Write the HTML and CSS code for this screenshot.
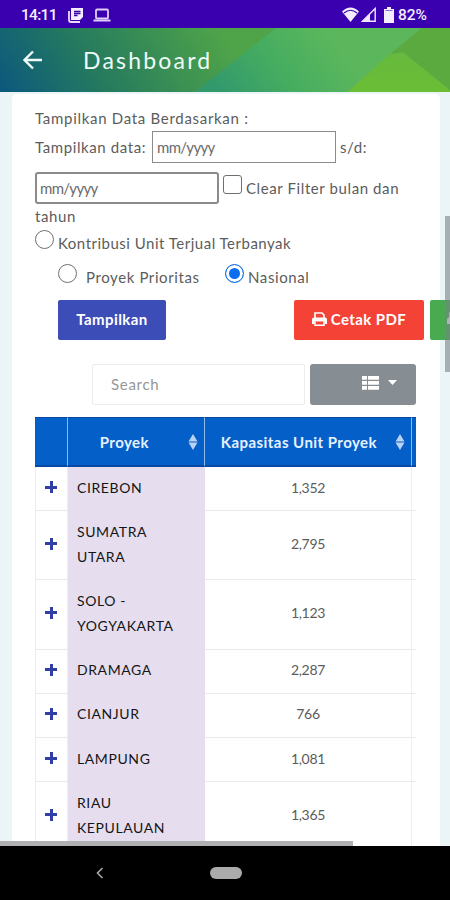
FILE: index.html
```html
<!DOCTYPE html>
<html lang="id">
<head>
  <meta charset="UTF-8">
  <meta name="viewport" content="width=device-width, initial-scale=1.0">
  <title>Dashboard</title>
  <link rel="stylesheet" href="styles.css">
</head>
<body>
  <div class="status-bar">
    <span class="clock">14:11</span>
    <svg class="status-news" width="16" height="16" viewBox="0 0 16 16">
      <path d="M1 4v9q0 2 2 2h9" fill="none" stroke="#e9ddfb" stroke-width="1.8"/>
      <path d="M3 1h12v9l-3 3H3z" fill="#f4edff"/>
      <path d="M6 4.500h6.500M6 6.500h6.500M6 8.500h3.500" stroke="#3a00a8" stroke-width="1.300"/>
    </svg>
    <svg class="status-laptop" width="18" height="14" viewBox="0 0 18 14">
      <rect x="3" y="1.500" width="12" height="9" rx="1" fill="none" stroke="#e0cdf8" stroke-width="1.800"/>
      <path d="M0.500 12.500h17" stroke="#e0cdf8" stroke-width="2"/>
    </svg>
    <div class="status-right">
      <svg width="17" height="15" viewBox="0 0 17 15">
        <path d="M0 4.500Q8.500 -3.500 17 4.500L8.500 15z" fill="#f4edff"/>
        <path d="M2 6Q8.500 0.500 15 6" fill="none" stroke="#3a00b0" stroke-width="1.200"/>
      </svg>
      <svg width="15" height="15" viewBox="0 0 15 15">
        <path d="M1.500 14.200L14.200 1.500V14.200z" fill="none" stroke="#f0e6ff" stroke-width="1.400"/>
        <path d="M1 14.500L9 6.500V14.500z" fill="#f0e6ff"/>
      </svg>
      <svg class="battery" width="10" height="16" viewBox="0 0 10 16">
        <path d="M3 0h4v2h3v14H0V2h3z" fill="#f4edff"/>
        <path d="M1.500 3.500h7" stroke="#8c68cf" stroke-width="1"/>
      </svg>
      <span class="percent">82%</span>
    </div>
  </div>

  <header class="app-bar">
    <svg class="app-bar-bg" viewBox="0 0 450 64" preserveAspectRatio="none">
      <defs>
        <linearGradient id="base" x1="0" y1="64" x2="190" y2="-50" gradientUnits="userSpaceOnUse">
          <stop offset="0" stop-color="#0b587e"/>
          <stop offset="0.400" stop-color="#24795f"/>
          <stop offset="1" stop-color="#4fa449"/>
        </linearGradient>
        <linearGradient id="mid" x1="220" y1="64" x2="320" y2="-10" gradientUnits="userSpaceOnUse">
          <stop offset="0" stop-color="#32996d"/>
          <stop offset="0.500" stop-color="#46ad60"/>
          <stop offset="1" stop-color="#5cb75c"/>
        </linearGradient>
        <linearGradient id="leaf" x1="0" y1="0" x2="0" y2="1">
          <stop offset="0" stop-color="#66b93e"/>
          <stop offset="1" stop-color="#6abe35"/>
        </linearGradient>
      </defs>
      <rect width="450" height="64" fill="url(#base)"/>
      <path d="M276 0H422L347 64H195z" fill="url(#mid)"/>
      <path d="M422 0H450V62L403 24L390 26z" fill="#5aaa40"/>
      <path d="M390 26L403 24L450 62V64H347z" fill="url(#leaf)"/>
    </svg>
    <svg class="back" width="20" height="20" viewBox="0 0 20 20">
      <path d="M19 10H2M10 1.500L1.500 10L10 18.500" fill="none" stroke="#eefaf8" stroke-width="2.400"/>
    </svg>
    <h1>Dashboard</h1>
  </header>

  <main class="content">
    <div class="card">
      <form class="filter">
        <div class="line line-title">Tampilkan Data Berdasarkan :</div>
        <div class="line line-from">
          <span class="label-from">Tampilkan data:</span>
          <input class="month square" type="text" placeholder="mm/yyyy">
          <span class="label-sd">s/d:</span>
        </div>
        <div class="line line-to">
          <input class="month" type="text" placeholder="mm/yyyy">
          <span class="check"></span>
          <span class="label-clear">Clear Filter bulan dan</span>
        </div>
        <div class="line line-year">tahun</div>
        <div class="line line-sold">
          <span class="radio"></span>
          <span class="label-sold">Kontribusi Unit Terjual Terbanyak</span>
        </div>
        <div class="line line-scope">
          <span class="radio"></span>
          <span class="label-priority">Proyek Prioritas</span>
          <span class="radio checked"></span>
          <span class="label-national">Nasional</span>
        </div>
      </form>

      <div class="actions">
        <button class="btn btn-show">Tampilkan</button>
        <button class="btn btn-pdf">
          <svg width="15" height="14" viewBox="0 0 15 14">
            <path d="M3 6V1h7l2 2v3" fill="none" stroke="#fff" stroke-width="1.700"/>
            <path d="M2 5.500h11q2 0 2 2V12h-2.500V9.500h-10V12H0V7.500q0-2 2-2z" fill="#fff"/>
            <path d="M3 9.500v3.700h9V9.500" fill="none" stroke="#fff" stroke-width="1.500"/>
          </svg>
          <span>Cetak PDF</span>
        </button>
        <button class="btn btn-excel">
          <svg width="15" height="14" viewBox="0 0 15 14">
            <path d="M3 6V1h7l2 2v3" fill="none" stroke="#fff" stroke-width="1.700"/>
            <path d="M2 5.500h11q2 0 2 2V12H0V7.500q0-2 2-2z" fill="#fff"/>
          </svg>
        </button>
      </div>

      <div class="toolbar">
        <input class="search" type="text" placeholder="Search">
        <button class="columns">
          <svg width="17" height="14" viewBox="0 0 17 14" fill="#fff">
            <path d="M0 0h5v3.800H0zM6 0h11v3.800H6zM0 5h5v3.800H0zM6 5h11v3.800H6zM0 10h5v3.800H0zM6 10h11v3.800H6z"/>
          </svg>
          <svg width="9" height="5" viewBox="0 0 9 5"><path d="M0 0h9L4.500 5z" fill="#fff"/></svg>
        </button>
      </div>

      <div class="table-wrap">
        <table>
          <colgroup>
            <col class="col-plus"><col class="col-name"><col class="col-cap"><col class="col-next">
          </colgroup>
          <thead>
            <tr>
              <th></th>
              <th><div class="th-in"><span class="th-name">Proyek</span><svg width="10" height="16" viewBox="0 0 10 16" fill="#b9d2f3"><path d="M5 0L9.500 7.500H0.500zM5 16L9.500 8.500H0.500z"/></svg></div></th>
              <th><div class="th-in"><span class="th-cap">Kapasitas Unit Proyek</span><svg width="10" height="16" viewBox="0 0 10 16" fill="#b9d2f3"><path d="M5 0L9.500 7.500H0.500zM5 16L9.500 8.500H0.500z"/></svg></div></th>
              <th></th>
            </tr>
          </thead>
          <tbody>
            <tr><td class="plus"><i></i></td><td class="name">CIREBON</td><td class="cap">1,352</td><td></td></tr>
            <tr><td class="plus"><i></i></td><td class="name">SUMATRA<br>UTARA</td><td class="cap">2,795</td><td></td></tr>
            <tr><td class="plus"><i></i></td><td class="name">SOLO -<br>YOGYAKARTA</td><td class="cap">1,123</td><td></td></tr>
            <tr><td class="plus"><i></i></td><td class="name">DRAMAGA</td><td class="cap">2,287</td><td></td></tr>
            <tr><td class="plus"><i></i></td><td class="name">CIANJUR</td><td class="cap">766</td><td></td></tr>
            <tr><td class="plus"><i></i></td><td class="name">LAMPUNG</td><td class="cap">1,081</td><td></td></tr>
            <tr><td class="plus"><i></i></td><td class="name">RIAU<br>KEPULAUAN</td><td class="cap">1,365</td><td></td></tr>
          </tbody>
        </table>
      </div>
    </div>
    <div class="scroll-y"></div>
    <div class="scroll-x"></div>
  </main>

  <nav class="nav-bar">
    <svg class="nav-back" width="8" height="12" viewBox="0 0 8 12">
      <path d="M6.500 1L1.500 6L6.500 11" fill="none" stroke="#a9a9a9" stroke-width="1.600"/>
    </svg>
    <div class="pill"></div>
  </nav>
</body>
</html>
```
FILE: styles.css
```css
* {
  box-sizing: border-box;
}

body {
  margin: 0;
  width: 450px;
  height: 900px;
  overflow: hidden;
  display: flex;
  flex-direction: column;
  font-family: Lato, "Open Sans", sans-serif;
  font-size: 14px;
  color: #5c5c5c;
  background-color: #ebf4f7;
}

/* Android status bar */
.status-bar {
  height: 28px;
  flex: none;
  display: flex;
  align-items: center;
  padding: 1px 20px 0 21px;
  background-color: #3a00b0;
  color: #f4edff;
  font-family: Roboto, sans-serif;
  font-size: 15.5px;
  font-weight: 500;
}

.clock {
  width: 47px;
  letter-spacing: -0.7px;
}

.status-laptop {
  margin-left: 9px;
}

.status-right {
  margin-left: auto;
  display: flex;
  align-items: center;
  gap: 2px;
}

.battery {
  margin-left: 6px;
}

.percent {
  margin-left: 2px;
  width: 32px;
}

/* App bar */
.app-bar {
  position: relative;
  height: 64px;
  flex: none;
  display: flex;
  align-items: center;
  padding-left: 23px;
}

.app-bar-bg {
  position: absolute;
  inset: 0;
  width: 100%;
  height: 100%;
}

.back {
  position: relative;
}

h1 {
  position: relative;
  margin: 0 0 0 40px;
  font-size: 23px;
  font-weight: 400;
  line-height: 30px;
  padding-bottom: 1px;
  letter-spacing: 2.2px;
  color: #eefaf8;
}

/* Page */
.content {
  position: relative;
  flex: 1;
  padding: 2px 10px 0 12px;
  overflow: hidden;
}

.card {
  height: 760px;
  padding: 11px 24px 0 23px;
  background-color: #fff;
  border-radius: 5px 5px 0 0;
}

.line {
  display: flex;
  align-items: center;
  height: 25px;
  white-space: nowrap;
  font-size: 15px;
  letter-spacing: 0.6px;
}

.line-title {
  letter-spacing: 0.7px;
}

.line-from {
  height: 34px;
}

.line-to {
  height: 33px;
  margin-top: 7px;
}

.line-year {
  height: 23px;
}

.line-sold {
  height: 31px;
  letter-spacing: 0.5px;
}

.line-scope {
  height: 37px;
  padding-left: 23px;
}

.label-from {
  width: 117px;
  padding-bottom: 1px;
}

.month {
  width: 184px;
  height: 32px;
  padding: 0 3px;
  border: 2px solid #8b8b8b;
  border-radius: 3px;
  font: inherit;
  letter-spacing: -0.7px;
  background-color: #fff;
}

.month.square {
  border-width: 1.5px;
  border-radius: 0;
  padding-left: 4px;
}

.month::placeholder {
  color: #6b6b6b;
  opacity: 1;
}

.label-sd {
  margin-left: 4px;
  padding-bottom: 1px;
}

.check {
  width: 19px;
  height: 19px;
  margin: 0 4px 7px 4px;
  border: 1.5px solid #6f6f6f;
  border-radius: 3px;
}

.radio {
  flex: none;
  width: 19px;
  height: 19px;
  margin-bottom: 6px;
  border: 1.5px solid #6f6f6f;
  border-radius: 50%;
}

.radio.checked {
  border: 1.5px solid #1672e6;
  background-color: #0b6df0;
  box-shadow: inset 0 0 0 3px #fff;
}

.label-sold {
  margin-left: 4px;
}

.label-priority {
  margin-left: 9px;
  width: 139px;
}

.label-national {
  margin-left: 4px;
}

/* Buttons */
.actions {
  display: flex;
  margin-top: 5px;
  padding-left: 23px;
}

.btn {
  flex: none;
  display: flex;
  align-items: center;
  justify-content: center;
  gap: 4px;
  height: 40px;
  padding: 0 0 2px;
  border: none;
  border-radius: 2px;
  color: #fff;
  font: bold 15px Lato, sans-serif;
  letter-spacing: 0.4px;
}

.btn-show {
  width: 108px;
  background-color: #3d4db7;
}

.btn-pdf {
  width: 130px;
  margin-left: 128px;
  background-color: #f44336;
}

.btn-excel {
  width: 130px;
  margin-left: 6px;
  padding-left: 17px;
  justify-content: flex-start;
  background-color: #49ab4f;
}

.toolbar {
  display: flex;
  gap: 5px;
  margin-top: 24px;
  padding-left: 57px;
}

.search {
  width: 213px;
  height: 41px;
  padding: 0 18px 2px;
  border: 1px solid #ececec;
  border-radius: 2px;
  font: inherit;
  font-size: 15px;
  letter-spacing: 0.7px;
}

.search::placeholder {
  color: #969696;
  opacity: 1;
}

.columns {
  flex: 1;
  height: 41px;
  display: flex;
  align-items: center;
  justify-content: flex-end;
  gap: 9px;
  padding: 0 19px 4px 0;
  border: none;
  border-radius: 3px;
  background-color: #868e93;
}

/* Table */
.table-wrap {
  width: 381px;
  margin-top: 12px;
  overflow: hidden;
}

table {
  width: 420px;
  table-layout: fixed;
  border-collapse: separate;
  border-spacing: 0;
}

.col-plus {
  width: 33px;
}

.col-name {
  width: 137px;
}

.col-cap {
  width: 207px;
}

.col-next {
  width: 43px;
}

th {
  height: 50px;
  padding: 0;
  color: #e6f1ff;
  background-color: #055fc8;
  border-right: 1px solid #8fbbed;
  border-top: 1px solid #0748a2;
  border-bottom: 2px solid #0748a2;
  font-size: 15px;
  letter-spacing: 0.45px;
  white-space: nowrap;
}

.th-in {
  display: flex;
  align-items: center;
  justify-content: flex-end;
  padding-right: 6px;
}

.th-name {
  margin-right: 39px;
}

.th-cap {
  margin-right: 18px;
}

td {
  padding: 7.6px 0 10.6px;
  line-height: 25px;
  border-bottom: 1px solid #e9e9e9;
  border-right: 1px solid #efefef;
}

.plus {
  border-left: 1px solid #ececec;
}

/* Expand marker */
.plus i {
  display: block;
  width: 12px;
  height: 12px;
  margin: 0 0 0 9px;
  background:
    linear-gradient(#303fa8, #303fa8) center / 12px 3px no-repeat,
    linear-gradient(#303fa8, #303fa8) center / 3px 12px no-repeat;
}

.name {
  padding-left: 9px;
  color: #151515;
  background-color: #e6deef;
  border-color: #e6deef;
  letter-spacing: 0.6px;
}

.cap {
  text-align: center;
  letter-spacing: -0.3px;
}

/* Scroll indicators lie over the page */
.scroll-y {
  position: absolute;
  top: 124px;
  right: 0;
  width: 5px;
  height: 156px;
  background-color: rgba(120, 130, 135, 0.6);
}

.scroll-x {
  position: absolute;
  left: 0;
  bottom: 0;
  width: 353px;
  height: 5px;
  background-color: #b0afb1;
}

.nav-bar {
  height: 54px;
  flex: none;
  display: flex;
  align-items: center;
  padding-left: 96px;
  background-color: #000;
}

.pill {
  width: 32px;
  height: 12px;
  margin-left: 106px;
  border-radius: 6px;
  background-color: #ababab;
}
```
